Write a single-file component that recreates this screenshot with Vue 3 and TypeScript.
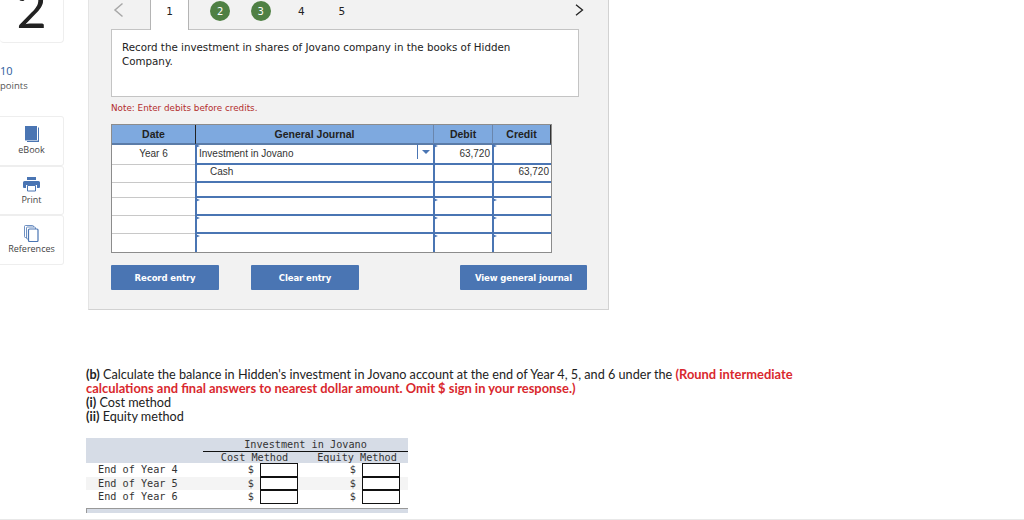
<script setup lang="ts">
interface Row { date: string; account: string; indent: boolean; debit: string; credit: string }
const rows: Row[] = [
  { date: 'Year 6', account: 'Investment in Jovano', indent: false, debit: '63,720', credit: '' },
  { date: '', account: 'Cash', indent: true, debit: '', credit: '63,720' },
  { date: '', account: '', indent: false, debit: '', credit: '' },
  { date: '', account: '', indent: false, debit: '', credit: '' },
  { date: '', account: '', indent: false, debit: '', credit: '' },
  { date: '', account: '', indent: false, debit: '', credit: '' },
]
const years = ['End of Year 4', 'End of Year 5', 'End of Year 6']
</script>

<template>
  <div class="page">
    <aside class="side">
      <div class="num-card"><span class="big">2</span></div>
      <div class="points"><div class="pv">10</div><div class="pl">points</div></div>
      <div class="tools">
        <div class="tool">
          <svg width="16" height="17" viewBox="0 0 16 17"><path d="M1 0h12v14H1z" fill="#4a75b3"/><path d="M14 1.500h1V16H3v-1h11z" fill="#4a75b3"/><path d="M1 14.500h13" stroke="#9db6d8" stroke-width=".8"/></svg>
          <span>eBook</span>
        </div>
        <div class="tool">
          <svg width="17" height="15" viewBox="0 0 17 15"><path d="M4 0h9v3H4z" fill="#4a75b3"/><path d="M1.500 4h14A1.500 1.500 0 0 1 17 5.500V10a1 1 0 0 1-1 1h-2V8H3v3H1a1 1 0 0 1-1-1V5.500A1.500 1.500 0 0 1 1.500 4z" fill="#4a75b3"/><path d="M4.500 8.500h8V14h-8z" fill="#fff" stroke="#4a75b3"/></svg>
          <span>Print</span>
        </div>
        <div class="tool">
          <svg width="15" height="17" viewBox="0 0 15 17" fill="#fff" stroke="#4a75b3" stroke-width=".8"><rect x=".5" y=".5" width="9" height="12" rx="1"/><rect x="2.500" y="2" width="9" height="12" rx="1"/><rect x="4.500" y="4" width="9.500" height="12.500" rx="1" stroke-width="1.200"/></svg>
          <span>References</span>
        </div>
      </div>
    </aside>

    <main class="main">
      <section class="panel">
        <nav class="tabs">
          <svg class="prev" width="11" height="16" viewBox="0 0 11 16"><path d="M9.500 1.500 2 8l7.500 6.500" fill="none" stroke="#a8a8a8" stroke-width="1.500"/></svg>
          <div class="tab active">1</div>
          <div class="tab"><span class="done">2</span></div>
          <div class="tab"><span class="done">3</span></div>
          <div class="tab">4</div>
          <div class="tab">5</div>
          <svg class="next" width="9" height="12" viewBox="0 0 9 12"><path d="M1 .8 7.500 6 1 11.200" fill="none" stroke="#222" stroke-width="1.300"/></svg>
        </nav>
        <div class="question">Record the investment in shares of Jovano company in the books of Hidden Company.</div>
        <p class="note">Note: Enter debits before credits.</p>

        <div class="journal">
          <div class="jrow head">
            <div class="c date">Date</div>
            <div class="c acct">General Journal</div>
            <div class="c num">Debit</div>
            <div class="c num">Credit</div>
          </div>
          <div v-for="(r, i) in rows" :key="i" class="jrow">
            <div class="c date">{{ r.date }}</div>
            <div class="c acct cell" :class="{ indent: r.indent }">
              <i class="mark"></i>{{ r.account }}
              <span v-if="i === 0" class="drop"><i></i></span>
            </div>
            <div class="c num cell"><i class="mark"></i>{{ r.debit }}</div>
            <div class="c num cell"><i class="mark"></i>{{ r.credit }}</div>
          </div>
        </div>

        <div class="actions">
          <button class="btn rec">Record entry</button>
          <button class="btn clr">Clear entry</button>
          <button class="btn view">View general journal</button>
        </div>
      </section>

      <section class="part">
        <p><b>(b)</b> Calculate the balance in Hidden's investment in Jovano account at the end of Year 4, 5, and 6 under the <strong>(Round intermediate calculations and final answers to nearest dollar amount. Omit $ sign in your response.)</strong></p>
        <p><b>(i)</b> Cost method</p>
        <p><b>(ii)</b> Equity method</p>
      </section>

      <section class="calc">
        <div class="chead">
          <div class="t1">Investment in Jovano</div>
          <div class="t2"><span>Cost Method</span><span>Equity Method</span></div>
        </div>
        <div v-for="y in years" :key="y" class="crow">
          <span class="yr">{{ y }}</span>
          <span class="dl">$</span><span class="inp"></span>
          <span class="dl d2">$</span><span class="inp"></span>
        </div>
        <div class="cfoot"></div>
      </section>
    </main>
    <div class="baseline"></div>
  </div>
</template>

<style>
html, body { margin: 0; background: #fff; }
</style>

<style scoped>
.page { position: relative; display: flex; width: 1024px; height: 520px; overflow: hidden; background: #fff; font-family: "Liberation Sans", Arial, sans-serif; }
.side { width: 64px; margin-right: 24px; flex: none; }
.num-card { height: 43px; box-sizing: border-box; border: 1px solid #eee; border-top: 0; border-left: 0; border-radius: 0 0 4px 4px; overflow: hidden; display: flex; justify-content: center; align-items: flex-end; padding-bottom: 21px; }
.big { font: 400 52px/26px Lato, sans-serif; color: #222; height: 26px; display: block; }
.points { margin-top: 21px; height: 52px; font: 10.500px/14.500px "Open Sans", sans-serif; color: #555; }
.pv { color: #2b5b9b; font-size: 11px; }
.pl { font-size: 9.500px; }
.tools { display: flex; flex-direction: column; }
.tool { height: 49.500px; box-sizing: border-box; border: 1px solid #eee; border-left: 0; border-radius: 0 3px 3px 0; display: flex; flex-direction: column; align-items: center; justify-content: flex-start; padding-top: 9px; gap: 1px; font: 9px/12px "Open Sans", sans-serif; color: #444; }
.tool svg { flex: none; height: 17px; }
.main { width: 936px; }
.panel { width: 521px; height: 310px; box-sizing: border-box; background: #f2f2f2; border-right: 1px solid #d2d2d2; border-bottom: 1px solid #d2d2d2; border-left: 1px solid #e4e4e4; padding-left: 22px; }
.tabs { position: relative; display: flex; height: 29px; color: #222; padding-left: 39px; }
.prev { position: absolute; left: 2px; top: 2px; }
.next { position: absolute; left: 464px; top: 4px; }
.tab { width: 40.500px; height: 22px; display: flex; align-items: center; justify-content: center; font: 10.500px "DejaVu Sans", sans-serif; }
.tab.active { width: 39px; height: 30px; box-sizing: border-box; border: 1px solid #b4b4b4; border-top: 0; border-bottom: 0; background: #fff; padding-bottom: 9px; margin-right: 11px; position: relative; z-index: 1; }
.done { width: 20px; height: 20px; border-radius: 50%; background: #4f8044; color: #fff; display: flex; align-items: center; justify-content: center; font-size: 10px; }
.question { width: 468px; height: 68px; box-sizing: border-box; background: #fff; border: 1px solid #c4c4c4; padding: 10px 60px 0 10px; font: 10.300px/14px "DejaVu Sans", Verdana, sans-serif; color: #222; }
.note { margin: 4px 0 0; font: 8.800px/14px "DejaVu Sans", Verdana, sans-serif; color: #b32d2d; height: 23px; }
.journal { width: 441px; box-sizing: border-box; border: 1px solid #8c8c8c; background: #fff; }
.jrow { display: grid; grid-template-columns: 83px 238px 59px 59px; height: 18px; font: 10px/19px "Liberation Sans", sans-serif; color: #333; }
.jrow.head { height: 19px; background: #7ea9df; font-weight: bold; font-size: 10.500px; color: #222; }
.c { box-sizing: border-box; }
.date { text-align: center; border-bottom: 1px solid #c8c8c8; }
.head .c { text-align: center; border-bottom: 2px solid #5b7ca8; line-height: 18px; }
.head .acct { border-left: 1px solid #222; }
.head .num { border-left: 1px solid #6a86ad; }
.head .num:last-child { border-right: 1px solid #333; }
.jrow:last-child .c { border-bottom: 0; }
.cell { position: relative; border-left: 2px solid #4a75b3; border-bottom: 2px solid #4a75b3; padding: 0 2px; white-space: nowrap; }
.jrow:last-child .cell { border-bottom: 0; }
.acct.indent { padding-left: 13px; }
.num.cell { text-align: right; }
.mark { position: absolute; left: -2px; top: 0; width: 0; height: 0; border-left: 5px solid #4a75b3; border-top: 2.500px solid transparent; border-bottom: 2.500px solid transparent; }
.drop { position: absolute; right: 0; top: 0; width: 15px; height: 15px; border-left: 1px solid #4a75b3; display: flex; align-items: center; justify-content: center; }
.drop i { width: 0; height: 0; border-top: 4px solid #4a75b3; border-left: 4px solid transparent; border-right: 4px solid transparent; }
.actions { display: flex; margin-top: 12px; }
.btn { height: 25px; box-sizing: border-box; background: #4a75b3; border: 0; border-radius: 1px; padding: 0; color: #fff; font: bold 8.500px "DejaVu Sans", sans-serif; letter-spacing: -.1px; }
.rec { width: 108px; margin-right: 32px; }
.clr { width: 108px; margin-right: 101px; }
.view { width: 127px; }
.part { margin: 57px 0 0 -2px; width: 720px; font: 12.670px/14px Lato, sans-serif; color: #222; }
.part p { margin: 0; }
.part strong { color: #d9282e; font-size: 12.900px; }
.calc { margin: 15px 0 0 -2px; width: 322px; font: 10.200px/13px "DejaVu Sans Mono", monospace; color: #333; }
.chead { height: 25px; background: #d6dce6; padding-left: 117px; box-sizing: border-box; text-align: center; }
.t1 { height: 13px; border-bottom: 1px solid #111; line-height: 13px; }
.t2 { display: flex; line-height: 12px; }
.t2 span:first-child { width: 103px; }
.t2 span:last-child { width: 102px; }
.crow { display: flex; align-items: center; height: 13.500px; }
.crow:nth-of-type(3) { background: #f4f4f4; }
.yr { width: 153px; padding-left: 12px; box-sizing: border-box; flex: none; }
.dl { width: 21px; padding-right: 6px; box-sizing: border-box; text-align: right; flex: none; }
.d2 { margin-left: 43px; }
.inp { width: 38px; height: 13.500px; border: 1px solid #111; box-sizing: border-box; background: #fff; flex: none; }
.cfoot { margin-top: 4px; height: 5px; background: #d6dce6; border-top: 1px solid #999; border-left: 1px solid #999; box-sizing: border-box; }
.baseline { position: absolute; left: 0; right: 0; bottom: 0; height: 1px; background: #e8e8e8; }
</style>
